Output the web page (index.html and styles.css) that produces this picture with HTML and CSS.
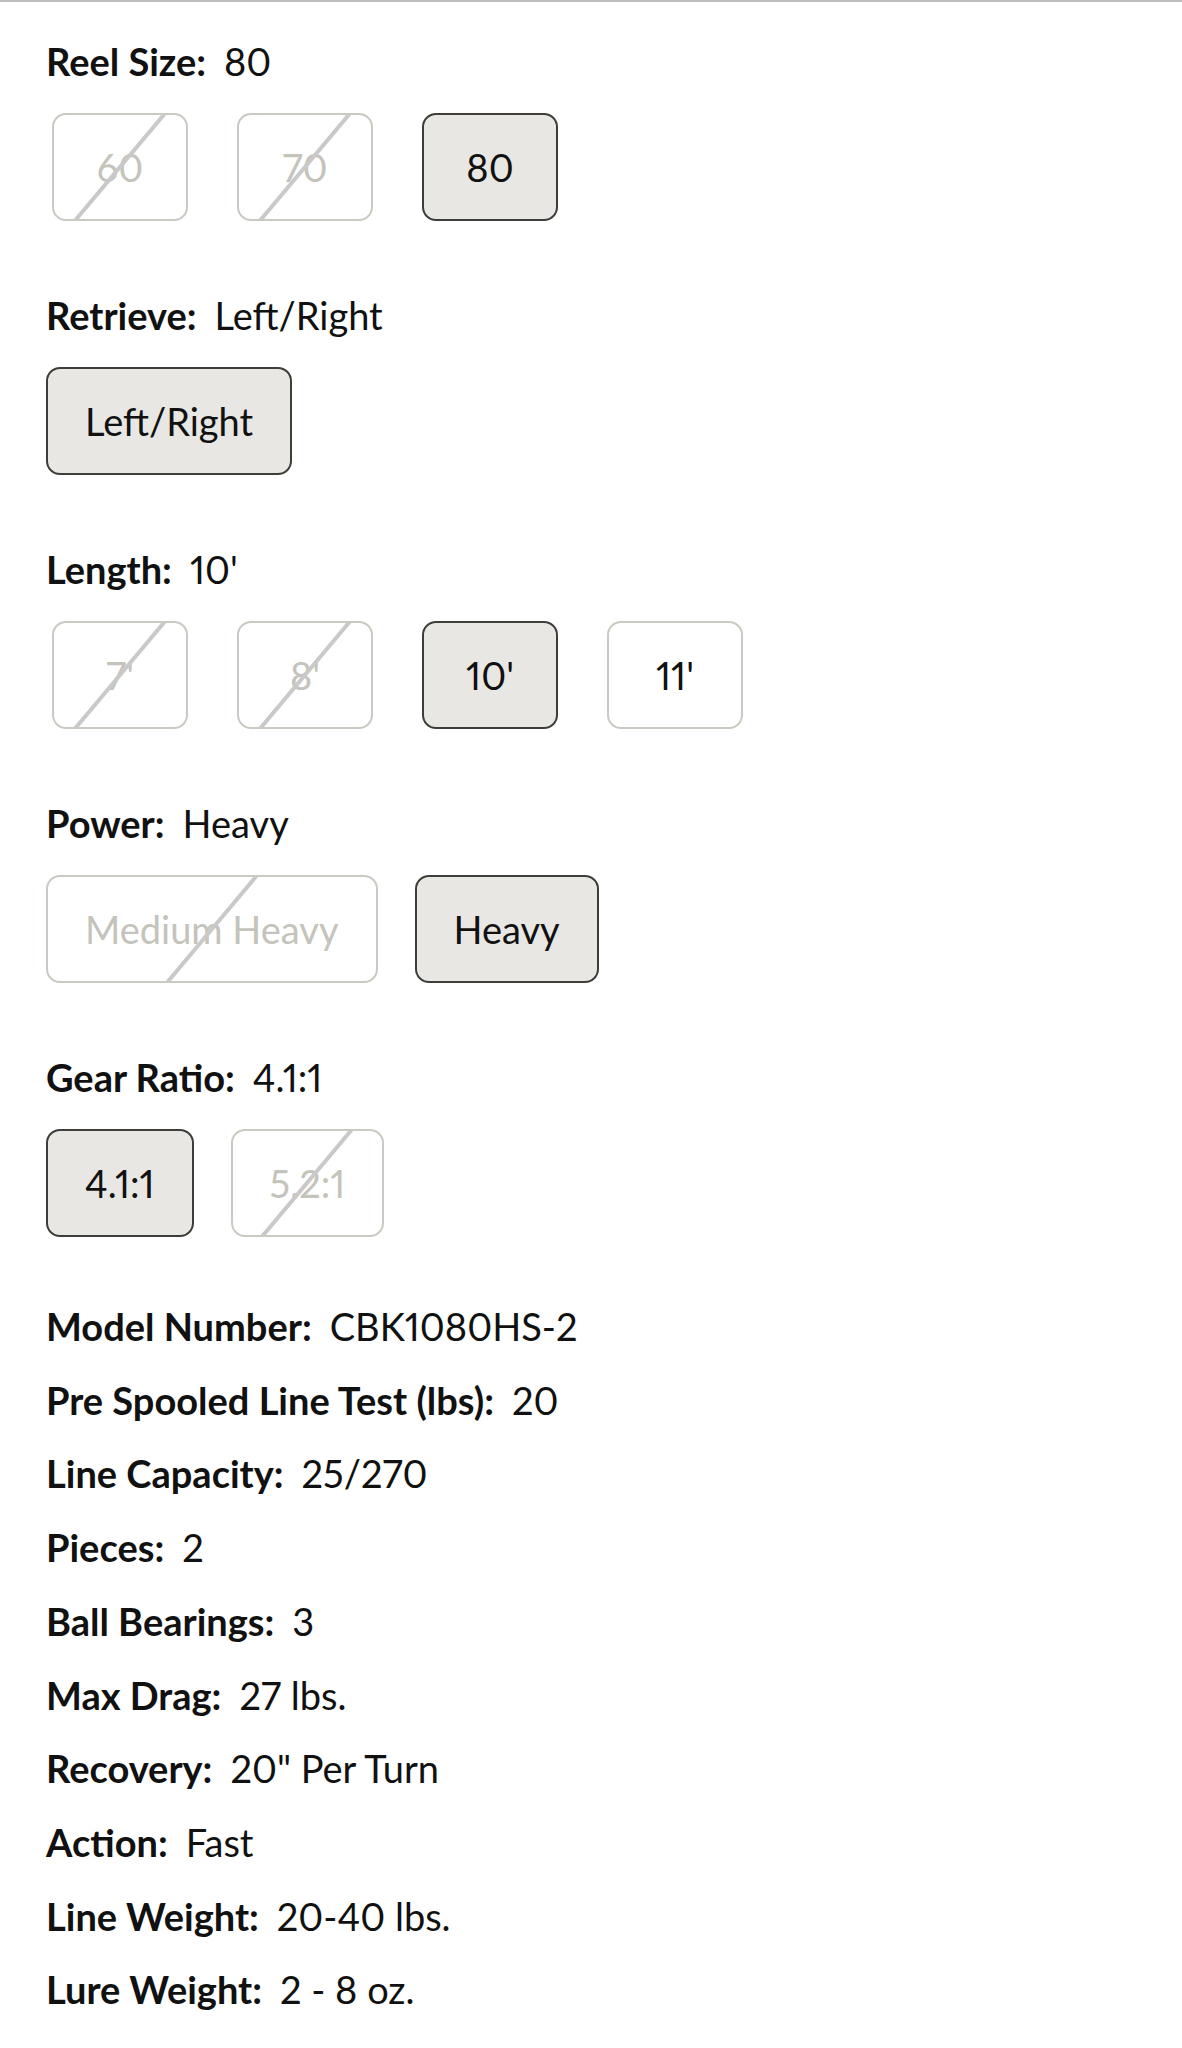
FILE: index.html
```html
<!DOCTYPE html>
<html lang="en">
<head>
  <meta charset="UTF-8">
  <meta name="viewport" content="width=device-width, initial-scale=1.0">
  <title>Reel &amp; Rod Options</title>
<link rel="stylesheet" href="styles.css">
</head>
<body>
  <main class="product-options">
    <!-- Reel size -->
    <div class="option-group">
      <p class="option-label"><strong>Reel Size:</strong><span class="option-value">80</span></p>
      <div class="swatches">
        <button class="swatch swatch--compact swatch--unavailable">60</button>
        <button class="swatch swatch--compact swatch--unavailable">70</button>
        <button class="swatch swatch--compact swatch--selected">80</button>
      </div>
    </div>

    <!-- Retrieve -->
    <div class="option-group">
      <p class="option-label"><strong>Retrieve:</strong><span class="option-value">Left/Right</span></p>
      <div class="swatches">
        <button class="swatch swatch--selected">Left/Right</button>
      </div>
    </div>

    <!-- Length -->
    <div class="option-group">
      <p class="option-label"><strong>Length:</strong><span class="option-value">10'</span></p>
      <div class="swatches">
        <button class="swatch swatch--compact swatch--unavailable">7'</button>
        <button class="swatch swatch--compact swatch--unavailable">8'</button>
        <button class="swatch swatch--compact swatch--selected">10'</button>
        <button class="swatch swatch--compact">11'</button>
      </div>
    </div>

    <!-- Power -->
    <div class="option-group">
      <p class="option-label"><strong>Power:</strong><span class="option-value">Heavy</span></p>
      <div class="swatches">
        <button class="swatch swatch--unavailable">Medium Heavy</button>
        <button class="swatch swatch--selected">Heavy</button>
      </div>
    </div>

    <!-- Gear ratio -->
    <div class="option-group">
      <p class="option-label"><strong>Gear Ratio:</strong><span class="option-value">4.1:1</span></p>
      <div class="swatches">
        <button class="swatch swatch--selected">4.1:1</button>
        <button class="swatch swatch--unavailable">5.2:1</button>
      </div>
    </div>

    <!-- Specifications -->
    <ul class="specs">
      <li><strong>Model Number:</strong><span class="option-value">CBK1080HS-2</span></li>
      <li><strong>Pre Spooled Line Test (lbs):</strong><span class="option-value">20</span></li>
      <li><strong>Line Capacity:</strong><span class="option-value">25/270</span></li>
      <li><strong>Pieces:</strong><span class="option-value">2</span></li>
      <li><strong>Ball Bearings:</strong><span class="option-value">3</span></li>
      <li><strong>Max Drag:</strong><span class="option-value">27 lbs.</span></li>
      <li><strong>Recovery:</strong><span class="option-value">20" Per Turn</span></li>
      <li><strong>Action:</strong><span class="option-value">Fast</span></li>
      <li><strong>Line Weight:</strong><span class="option-value">20-40 lbs.</span></li>
      <li><strong>Lure Weight:</strong><span class="option-value">2 - 8 oz.</span></li>
    </ul>
  </main>
</body>
</html>
```

FILE: styles.css
```css
/* General Styles */
body {
  font-family: 'Lato', 'Open Sans', sans-serif;
  font-variant-numeric: proportional-nums;
  margin: 0;
  padding: 0;
  background-color: #fff;
  color: #111;
  border-top: 2px solid #bdbdbd;
}

.product-options {
  padding: 32px 46px 0;
  font-size: 38px;
}

/* Option groups */
.option-group {
  margin-bottom: 67px;
}

.option-group:last-of-type {
  margin-bottom: 53px;
}

.option-label {
  margin: 0 0 25px;
  line-height: 54px;
}

.option-label strong,
.specs strong {
  font-weight: 700;
}

.option-value {
  margin-left: 18px;
}

/* Swatch buttons */
.swatches {
  display: flex;
  align-items: center;
  gap: 37px;
}

.swatch {
  position: relative;
  overflow: hidden;
  height: 108px;
  padding: 0 37px;
  font-family: inherit;
  font-variant-numeric: proportional-nums;
  font-size: 38px;
  color: #111;
  background-color: #fff;
  border: 2px solid #cac9c2;
  border-radius: 14px;
  cursor: pointer;
}

.swatch--compact {
  width: 136px;
  padding: 0;
  margin: 0 6px;
}

.swatch--selected {
  background-color: #e8e7e3;
  border-color: #3d3d39;
}

.swatch--unavailable {
  color: #c4c3bc;
  cursor: default;
}

/* diagonal strike through sold-out options */
.swatch--unavailable::after {
  content: '';
  position: absolute;
  left: 50%;
  top: 50%;
  width: 4px;
  height: 200px;
  margin: -100px 0 0 -2px;
  background-color: #c9c9c9;
  transform: rotate(40deg);
}

/* Specifications list */
.specs {
  list-style: none;
  margin: 0;
  padding: 0;
}

.specs li {
  line-height: 73.7px;
}
```
